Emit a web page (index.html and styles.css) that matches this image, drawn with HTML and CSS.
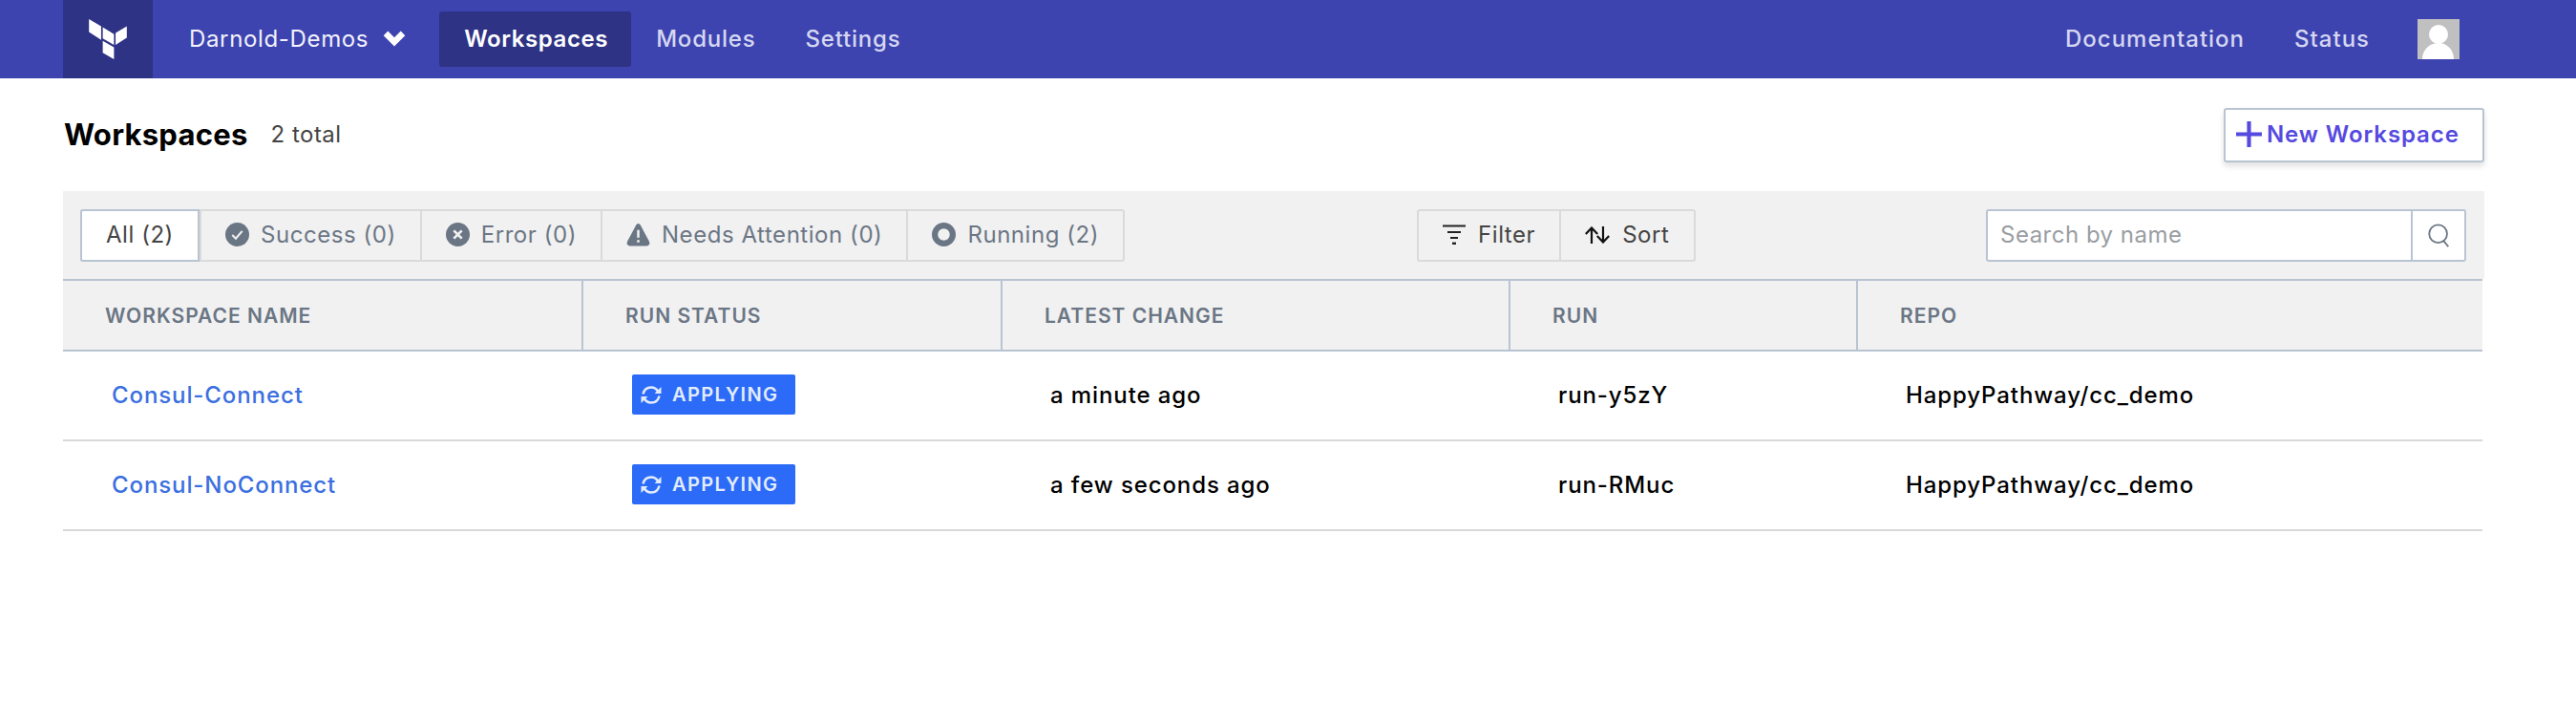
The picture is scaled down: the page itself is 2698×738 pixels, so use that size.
FILE: index.html
```html
<!DOCTYPE html>
<html lang="en">
<head>
  <meta charset="UTF-8" />
  <title>Workspaces</title>
  <link rel="stylesheet" href="styles.css">
</head>
<body>
  <header class="topbar">
    <a class="logo-box" href="#">
      <svg class="logo" viewBox="0 0 118 125">
        <polygon points="0,0 38,22 38,65 0,40" />
        <polygon points="43,25 78,47 78,80 43,60" />
        <polygon points="83,43 118,22 118,58 83,80" />
        <polygon points="43,68 78,88 78,125 43,105" />
      </svg>
    </a>
    <div class="org">
      <span>Darnold-Demos</span>
      <svg class="chevron" viewBox="0 0 20 14"><path d="M3 3 L10 10 L17 3" /></svg>
    </div>
    <nav class="nav-main">
      <a class="nav-link active" href="#">Workspaces</a>
      <a class="nav-link" href="#">Modules</a>
      <a class="nav-link" href="#">Settings</a>
    </nav>
    <nav class="nav-right">
      <a class="nav-link" href="#">Documentation</a>
      <a class="nav-link" href="#">Status</a>
      <svg class="avatar" viewBox="0 0 44 42">
        <rect width="44" height="42" fill="#c0c0c0" />
        <circle cx="22" cy="16" r="10" fill="#fff" />
        <path d="M5 42 C5 31 14 25 22 25 C30 25 38 31 38 42 Z" fill="#fff" />
      </svg>
    </nav>
  </header>

  <main class="page">
    <div class="page-head">
      <h1>Workspaces</h1>
      <span class="total">2 total</span>
      <button class="btn-new">
        <svg class="plus" viewBox="0 0 26 26"><path d="M13 0 V26 M0 13 H26" /></svg>
        New Workspace
      </button>
    </div>

    <div class="filter-bar">
      <div class="btn-group tabs">
        <a class="tab selected" href="#">All (2)</a>
        <a class="tab" href="#">
          <svg class="ico" viewBox="0 0 24 24">
            <circle cx="12" cy="12" r="12" fill="#6b7685" />
            <path d="M7 12.500 L10.500 16 L17 8.500" fill="none" stroke="#f1f1f1" stroke-width="2" />
          </svg>
          Success (0)
        </a>
        <a class="tab" href="#">
          <svg class="ico" viewBox="0 0 24 24">
            <circle cx="12" cy="12" r="12" fill="#6b7685" />
            <path d="M8 8 L16 16 M16 8 L8 16" fill="none" stroke="#f1f1f1" stroke-width="2.600" />
          </svg>
          Error (0)
        </a>
        <a class="tab" href="#">
          <svg class="ico" viewBox="0 0 24 24">
            <path d="M12 1 C13 1 14 2 14.500 3 L23 19 C24 21.500 23 23.500 20 23.500 L4 23.500 C1 23.500 0 21.500 1 19 L9.500 3 C10 2 11 1 12 1 Z" fill="#6b7685" />
            <path d="M12 7.500 V15 M12 17.500 V20" fill="none" stroke="#f1f1f1" stroke-width="2.400" />
          </svg>
          Needs Attention (0)
        </a>
        <a class="tab" href="#">
          <svg class="ico" viewBox="0 0 24 24">
            <circle cx="12" cy="12" r="9" fill="none" stroke="#6b7685" stroke-width="6" />
          </svg>
          Running (2)
        </a>
      </div>

      <div class="btn-group tools">
        <a class="tab tool" href="#">
          <svg class="ico-filter" viewBox="0 0 24 21">
            <path d="M0 1.500 H24 M5 8 H19 M8 14 H16" fill="none" stroke="#222" stroke-width="2.200" />
            <path d="M10 20 H14" fill="none" stroke="#222" stroke-width="2.800" />
          </svg>
          Filter
        </a>
        <a class="tab tool" href="#">
          <svg class="ico-sort" viewBox="0 0 26 18">
            <path d="M7 18 V1.500 M0.800 8 L7 1.500 L13.200 8 M19 0 V16.500 M12.800 10 L19 16.500 L25.200 10" fill="none" stroke="#111" stroke-width="2.200" />
          </svg>
          Sort
        </a>
      </div>

      <div class="search">
        <input type="text" placeholder="Search by name" />
        <span class="search-btn">
          <svg class="ico" viewBox="0 0 26 28">
            <circle cx="12" cy="12" r="10.500" fill="none" stroke="#6b7685" stroke-width="2" />
            <path d="M18 20 L24 27" fill="none" stroke="#6b7685" stroke-width="2" />
          </svg>
        </span>
      </div>
    </div>

    <div class="table">
      <div class="row head">
        <div class="cell">WORKSPACE NAME</div>
        <div class="cell">RUN STATUS</div>
        <div class="cell">LATEST CHANGE</div>
        <div class="cell">RUN</div>
        <div class="cell">REPO</div>
      </div>
      <div class="row">
        <div class="cell"><a class="ws-link" href="#">Consul-Connect</a></div>
        <div class="cell">
          <span class="badge">
            <svg class="sync" viewBox="0 0 22 19">
              <path d="M2.500 8.500 C3.500 4 7 1.500 11 1.500 C14 1.500 16.500 3 18 5.500 M19.500 10.500 C18.500 15 15 17.500 11 17.500 C8 17.500 5.500 16 4 13.500" />
              <path class="tip" d="M21.500 1 V8 H14.500 Z M0.500 18 V11 H7.500 Z" />
            </svg>
            APPLYING
          </span>
        </div>
        <div class="cell">a minute ago</div>
        <div class="cell">run-y5zY</div>
        <div class="cell">HappyPathway/cc_demo</div>
      </div>
      <div class="row">
        <div class="cell"><a class="ws-link" href="#">Consul-NoConnect</a></div>
        <div class="cell">
          <span class="badge">
            <svg class="sync" viewBox="0 0 22 19">
              <path d="M2.500 8.500 C3.500 4 7 1.500 11 1.500 C14 1.500 16.500 3 18 5.500 M19.500 10.500 C18.500 15 15 17.500 11 17.500 C8 17.500 5.500 16 4 13.500" />
              <path class="tip" d="M21.500 1 V8 H14.500 Z M0.500 18 V11 H7.500 Z" />
            </svg>
            APPLYING
          </span>
        </div>
        <div class="cell">a few seconds ago</div>
        <div class="cell">run-RMuc</div>
        <div class="cell">HappyPathway/cc_demo</div>
      </div>
    </div>
  </main>
</body>
</html>
```

FILE: styles.css
```css
* {
  box-sizing: border-box;
}
body {
  margin: 0;
  background-color: #fff;
  font-family: Inter, "Noto Sans", sans-serif;
  color: #000;
}
a {
  text-decoration: none;
  color: inherit;
}

/* top bar */
.topbar {
  display: flex;
  align-items: center;
  height: 82px;
  padding: 0 122px 0 66px;
  background-color: #3d44b0;
}
.logo-box {
  display: flex;
  justify-content: center;
  align-items: center;
  width: 94px;
  height: 82px;
  background-color: #2e3385;
}
.logo {
  width: 40px;
  height: 42px;
  fill: #fff;
}
.org {
  display: flex;
  align-items: center;
  margin-left: 38px;
  padding-bottom: 2px;
  font-size: 24px;
  letter-spacing: 0.65px;
  color: #f2f2fb;
}
.chevron {
  width: 26px;
  height: 18px;
  margin-left: 14px;
  fill: none;
  stroke: #fff;
  stroke-width: 5;
}
.nav-main {
  display: flex;
  align-items: center;
  margin-left: 34px;
}
.nav-right {
  display: flex;
  align-items: center;
  margin-left: auto;
}
.nav-link {
  display: flex;
  align-items: center;
  height: 58px;
  padding: 0 26px 2px;
  border-radius: 3px;
  font-size: 24px;
  font-weight: 500;
  letter-spacing: 0.8px;
  color: #d5d7f1;
}
.nav-right .nav-link {
  letter-spacing: 1px;
}
.nav-link.active {
  padding-right: 24px;
  background-color: #2e3385;
  color: #fff;
  font-weight: 600;
  letter-spacing: 0.6px;
}
.avatar {
  width: 44px;
  height: 42px;
  margin-left: 24px;
}

/* page */
.page {
  padding: 0 96px 0 66px;
}
.page-head {
  display: flex;
  align-items: center;
  height: 118px;
}
h1 {
  margin: 0 0 2px 1px;
  font-size: 31px;
  font-weight: 700;
  letter-spacing: 0.25px;
}
.total {
  margin: 0 0 2px 24px;
  font-size: 24px;
  letter-spacing: 0.5px;
  color: #444;
}
.btn-new {
  display: flex;
  align-items: center;
  gap: 5px;
  height: 57px;
  width: 273px;
  margin-left: auto;
  padding: 0 11px 2px;
  background-color: #fff;
  border: 2px solid #b9c4d2;
  border-radius: 3px;
  box-shadow: 0 4px 6px rgba(0,0,0,0.12);
  font-family: inherit;
  font-size: 24px;
  font-weight: 600;
  letter-spacing: 0.9px;
  color: #5549e0;
}
.plus {
  width: 27px;
  height: 27px;
  fill: none;
  stroke: #5549e0;
  stroke-width: 4;
}

/* filter bar */
.filter-bar {
  display: flex;
  align-items: center;
  height: 92px;
  padding: 0 19px 0 18px;
  background-color: #f1f1f1;
}
.btn-group {
  display: flex;
  height: 55px;
  border: 2px solid #dadada;
  border-radius: 3px;
}
.tools {
  margin-left: 306px;
}
.tab {
  display: flex;
  align-items: center;
  gap: 12px;
  padding: 0 25px 1px;
  border-left: 2px solid #dadada;
  font-size: 24px;
  letter-spacing: 0.55px;
  color: #6b7685;
}
.tab:first-child {
  border-left: none;
}
.tab.selected {
  margin: -2px 0 -2px -2px;
  padding: 0 25px 1px;
  background-color: #fff;
  border: 2px solid #b9c4d2;
  border-radius: 3px 0 0 3px;
  color: #444;
}
.tool {
  gap: 13px;
  color: #444;
}
.tool:last-child {
  padding-right: 26px;
}
.ico {
  width: 25px;
  height: 25px;
  flex: none;
}
.ico-filter {
  width: 24px;
  height: 21px;
  flex: none;
}
.ico-sort {
  width: 26px;
  height: 18px;
  flex: none;
}
.search {
  display: flex;
  width: 503px;
  height: 55px;
  margin-left: auto;
  background-color: #fff;
  border: 2px solid #b9c4d2;
  border-radius: 3px;
}
.search input {
  flex: 1;
  min-width: 0;
  padding: 0 13px 1px;
  border: none;
  border-right: 2px solid #b9c4d2;
  outline: none;
  background: transparent;
  font-family: inherit;
  font-size: 24px;
  letter-spacing: 0.5px;
}
.search input::placeholder {
  color: #999da3;
}
.search-btn {
  display: flex;
  justify-content: center;
  align-items: center;
  width: 54px;
}

/* table */
.table {
  margin-right: 2px;
}
.row {
  display: grid;
  grid-template-columns: 545px 439px 532px 364px 1fr;
  align-items: center;
  height: 94px;
  border-bottom: 2px solid #d8d8d8;
  font-size: 24px;
  font-weight: 500;
  letter-spacing: 0.9px;
}
.row .cell {
  padding: 0 0 2px 50px;
}
.row.head {
  align-items: stretch;
  height: 76px;
  background-color: #f1f1f1;
  border-top: 2px solid #b9c4d2;
  border-bottom: 2px solid #b9c4d2;
  font-size: 21px;
  font-weight: 600;
  letter-spacing: 1px;
  color: #6b7685;
}
.row.head .cell {
  display: flex;
  align-items: center;
  padding: 0 0 0 44px;
  border-right: 2px solid #b9c4d2;
}
.row.head .cell:last-child {
  border-right: none;
}
.row .cell:first-child {
  padding-left: 51px;
}
.row.head .cell:first-child {
  padding-left: 44px;
}
.ws-link {
  color: #3b6fe0;
}
.badge {
  display: inline-flex;
  align-items: center;
  gap: 11px;
  height: 42px;
  margin-left: 1px;
  padding: 0 18px 0 9px;
  background-color: #2b6bf7;
  border-radius: 2px;
  font-size: 20px;
  font-weight: 600;
  letter-spacing: 1.4px;
  color: #e3ecfd;
}
.sync {
  width: 22px;
  height: 19px;
  fill: none;
  stroke: #e3ecfd;
  stroke-width: 2.5;
}
.sync .tip {
  fill: #e3ecfd;
  stroke: none;
}
```
